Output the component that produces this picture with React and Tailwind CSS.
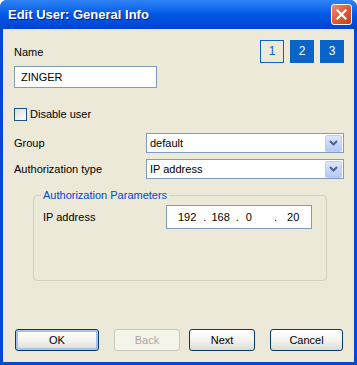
import { useState } from "react";

const ChevronDown = () => (
  <svg width="9" height="6" viewBox="0 0 9 6">
    <polyline points="1,1 4.5,4.5 8,1" fill="none" stroke="#4d6185" strokeWidth="2" />
  </svg>
);

const Select = ({ value }) => (
  <div className="flex items-center w-[198px] h-[20px] bg-white border border-[#7f9db9] pl-[3px] pr-px">
    <span className="flex-1">{value}</span>
    <div className="flex items-center justify-center w-[17px] h-[17px] rounded-[2px] border border-[#b9cdf6] bg-gradient-to-b from-[#dce6fd] to-[#b4c9f7]">
      <ChevronDown />
    </div>
  </div>
);

const Button = ({ children, width, disabled, isDefault }) => (
  <button
    className={`h-[22px] rounded-[3px] border text-[11px] ${width} ${
      disabled
        ? "border-[#c9c7ba] bg-[#f5f4ea] text-[#aca899]"
        : "border-[#003c74] bg-gradient-to-b from-white via-[#f4f3ee] to-[#dedcd0] text-black"
    } ${isDefault ? "shadow-[inset_0_0_0_2px_#a8c0ee]" : ""}`}
  >
    {children}
  </button>
);

const App = () => {
  const [disabled, setDisabled] = useState(false);

  return (
    <div className="w-[357px] h-[365px] bg-white font-['Liberation_Sans',Arial,sans-serif] text-[11px] leading-[13px] text-black">
      <div className="flex flex-col w-full h-full rounded-t-[7px] bg-[#0049d8] overflow-hidden">
        {/* title bar */}
        <div className="flex items-center h-[29px] pl-[8px] pr-[5px] bg-gradient-to-b from-[#2f83f5] via-[#0058e8] to-[#0044d0]">
          <span className="flex-1 text-[13px] font-bold text-white [text-shadow:1px_1px_0_#0a1e7a]">
            Edit User: General Info
          </span>
          <div className="flex items-center justify-center w-[21px] h-[21px] rounded-[3px] border border-white bg-gradient-to-br from-[#ee8a66] via-[#e25a30] to-[#c8401a]">
            <svg width="11" height="11" viewBox="0 0 11 11">
              <path d="M1.5 1.5 L9.5 9.5 M9.5 1.5 L1.5 9.5" stroke="white" strokeWidth="2.2" strokeLinecap="square" />
            </svg>
          </div>
        </div>

        {/* body */}
        <div className="flex flex-col flex-1 mx-[3px] mb-[3px] bg-[#ece9d8] pl-[11px] pr-[10px]">
          <div className="flex justify-between items-start pt-[11px]">
            <div className="flex flex-col">
              <span className="mt-[6px]">Name</span>
              <div className="flex items-center w-[143px] h-[22px] mt-[7px] bg-white border border-[#7f9db9] px-[6px]">
                ZINGER
              </div>
            </div>
            <div className="flex gap-[6px]">
              <div className="flex items-center justify-center w-[24px] h-[23px] border border-[#0a64c8] text-[#0a64c8] text-[12px]">
                1
              </div>
              <div className="flex items-center justify-center w-[24px] h-[23px] bg-[#0a64c8] text-white text-[12px]">
                2
              </div>
              <div className="flex items-center justify-center w-[24px] h-[23px] bg-[#0a64c8] text-white text-[12px]">
                3
              </div>
            </div>
          </div>

          <label className="flex items-center mt-[20px]" onClick={() => setDisabled(!disabled)}>
            <span className="w-[13px] h-[13px] border border-[#1c5180] bg-gradient-to-br from-[#dcdcd7] to-white" />
            <span className="ml-[3px]">Disable user</span>
          </label>

          <div className="flex items-center mt-[12px]">
            <span className="flex-1">Group</span>
            <Select value="default" />
          </div>
          <div className="flex items-center mt-[6px]">
            <span className="flex-1">Authorization type</span>
            <Select value="IP address" />
          </div>

          {/* Authorization parameters group box */}
          <div className="relative w-[294px] h-[86px] ml-[19px] mt-[16px] rounded-[4px] border border-[#d0d0bf] pt-[9px] pl-[9px] pr-[14px]">
            <span className="absolute -top-[7px] left-[7px] px-[2px] bg-[#ece9d8] text-[#0046d5]">
              Authorization Parameters
            </span>
            <div className="flex items-center">
              <span className="flex-1">IP address</span>
              <div className="flex items-center w-[146px] h-[24px] bg-white border border-[#7f9db9] pl-[11px]">
                <span>192</span>
                <span className="ml-[7px]">.</span>
                <span className="ml-[5px]">168</span>
                <span className="ml-[6px]">.</span>
                <span className="ml-[7px]">0</span>
                <span className="ml-[22px]">.</span>
                <span className="ml-[10px]">20</span>
              </div>
            </div>
          </div>

          <div className="flex items-center mt-[48px] ml-px">
            <Button width="w-[84px]" isDefault>OK</Button>
            <Button width="w-[66px] ml-[15px]" disabled>Back</Button>
            <Button width="w-[66px] ml-[9px]">Next</Button>
            <Button width="w-[73px] ml-[15px]">Cancel</Button>
          </div>
        </div>
      </div>
    </div>
  );
};

export default App;
